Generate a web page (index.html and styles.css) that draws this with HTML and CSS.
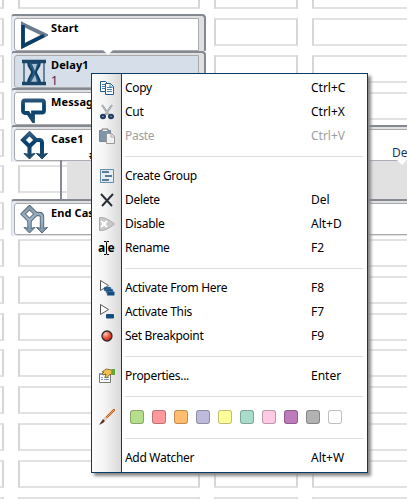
FILE: index.html
```html
<!DOCTYPE html>
<html lang="en"><head><meta charset="utf-8"><title>Workflow designer</title><link rel="stylesheet" href="styles.css"></head>
<body>
<svg class="defs" width="0" height="0">
  <defs>
    <linearGradient id="navy" gradientUnits="userSpaceOnUse" x1="0" y1="0" x2="0" y2="29"><stop offset="0" stop-color="#43647f"/><stop offset=".4" stop-color="#06406f"/><stop offset="1" stop-color="#244c6b"/></linearGradient>
    <linearGradient id="steel" gradientUnits="userSpaceOnUse" x1="0" y1="0" x2="0" y2="29"><stop offset="0" stop-color="#8292a1"/><stop offset=".5" stop-color="#9fb6c8"/><stop offset="1" stop-color="#7892a6"/></linearGradient>
    <radialGradient id="red" cx=".35" cy=".3" r=".8"><stop offset="0" stop-color="#ffc4b4"/><stop offset=".55" stop-color="#ec4c37"/><stop offset="1" stop-color="#a91e18"/></radialGradient>
    <g id="branch-lines"><path d="M9.500 2.500 16 9l-6.500 6.500L3 9Z" fill="none"/><path d="M9.500 15v10M15 9h4q3 0 3 3v13" fill="none"/></g>
    <path id="branch-heads" d="M4 22.500l5.500 5.500 5.500-5.500-5.500 1ZM16.500 22.500 22 28l5.500-5.500-5.500 1Z"/>
  </defs>
</svg>
<main class="designer">
  <div class="cells" id="cells"></div>
  <div class="flow">
    <section class="step"><div class="card"><svg class="step-icon" viewBox="0 0 28 28"><path d="M3 3.500 25 14 3 25Z" fill="#fff" stroke="#697b8c" stroke-width="4"/><path d="M24 14.500 3 25V4" fill="none" stroke="#083d69" stroke-width="3.600"/></svg><div class="name">Start</div></div></section>
    <section class="step selected"><div class="card"><svg class="step-icon" viewBox="0 0 28 28"><path d="M4 4v21M24 4v21" stroke="#64839a" stroke-width="2"/><path d="M8 4h12c0 6-4 7-4 10s4 6 4 11H8c0-5 4-8 4-11S8 10 8 4Z" fill="#285b83" stroke="#103e61" stroke-width="2"/><path d="M12 6h5l-2 7M11 24l4-7 2 7" fill="#a9c1d2"/><path d="M2 3.500h24M2 25.500h24" stroke="#194568" stroke-width="3.500"/></svg><div class="name">Delay1<span class="value">1</span></div></div></section>
    <section class="step"><div class="card"><svg class="step-icon" viewBox="0 0 28 28"><path d="M5 5.500h17q2 0 2 2v8q0 2-2 2h-9v8L8 18H5q-2 0-2-2V8q0-2.500 2-2.500Z" fill="#fff" stroke="url(#navy)" stroke-width="3.800"/></svg><div class="name">Message1</div></div></section>
    <section class="step wide"><div class="card"><svg class="step-icon" viewBox="0 0 28 29"><use href="#branch-lines" stroke="url(#navy)" stroke-width="4"/><use href="#branch-heads" fill="url(#navy)" stroke="url(#navy)"/></svg><div class="name">Case1<span class="hash">#</span></div></div></section>
    <section class="branches"><span class="rail"></span><div class="branch-area"></div><span class="default">De</span><i class="notch"></i></section>
    <section class="step wide end"><div class="card"><svg class="step-icon" viewBox="0 0 28 29"><use href="#branch-lines" stroke="#536574" stroke-width="4.400"/><use href="#branch-heads" fill="url(#steel)" stroke="#536574"/><use href="#branch-lines" stroke="url(#steel)" stroke-width="2.600"/></svg><div class="name">End Case1</div></div></section>
  </div>
  <i class="start-notch"></i>
</main>
<nav class="menu">
  <ul>
    <li><svg class="icon" viewBox="0 0 16 16"><g fill="#fff" stroke="#255c8b"><path d="M1.500 1.500h5l3 3v7h-8Z"/><path d="M6.500 3.500h5l3 3v8h-8Z"/></g><path d="M3 4.500h3M3 6.500h3M3 8.500h3M8 7.500h5M8 9.500h5M8 11.500h5M11 4v3h3" fill="none" stroke="#4d80aa"/></svg><span>Copy</span><kbd>Ctrl+C</kbd></li>
    <li><svg class="icon" viewBox="0 0 16 16"><path d="m3 1 7 10M13 1 6 11" stroke="#88909a" stroke-width="2"/><path d="m3 1 7 10M13 1 6 11" stroke="#dce0e3" stroke-width=".7"/><g fill="#7891b0" stroke="#213d65" stroke-width="2"><ellipse cx="4" cy="12.500" rx="2" ry="1.700"/><ellipse cx="12" cy="12.500" rx="2" ry="1.700"/></g></svg><span>Cut</span><kbd>Ctrl+X</kbd></li>
    <li class="off"><svg class="icon" viewBox="0 0 16 16"><path d="M.5 2.500h11v11H.5Z" fill="#8095aa" stroke="#778797"/><path d="M3 3V1h6v2" fill="#eee" stroke="#777"/><path d="M7.500 5.500h5l3 3v7h-8Z" fill="#f1f1f1" stroke="#999"/><path d="M12 6v3h3" fill="none" stroke="#aaa"/></svg><span>Paste</span><kbd>Ctrl+V</kbd></li>
    <li class="line"></li>
    <li><svg class="icon" viewBox="0 0 16 16"><path d="M1.500 1.500h13v13h-13Z" fill="#e5edf2" stroke="#648ba8"/><path d="M3 4h7M6 8h7M3 12h7" stroke="#597d98" stroke-width="2.200"/></svg><span>Create Group</span><kbd></kbd></li>
    <li><svg class="icon" viewBox="0 0 16 16"><path d="m2 2 11 12M14 2 3 14" stroke="#292e36" stroke-width="1.900"/></svg><span>Delete</span><kbd>Del</kbd></li>
    <li><svg class="icon" viewBox="0 0 16 16"><path d="M.5 1.500q6-1 15 6.500-9 7.500-15 6.500Z" fill="#c9c9c9" stroke="#aaa"/><path d="m2 5 6 6M8 5l-6 6" stroke="#fff" stroke-width="2"/></svg><span>Disable</span><kbd>Alt+D</kbd></li>
    <li><svg class="icon rename" viewBox="0 0 18 16"><text x="0" y="12">a</text><text x="9.500" y="12">e</text><path d="M6 1.500h2l.5 1 .5-1h2M8.500 2.500v11M6 14.500h2l.5-1 .5 1h2" fill="none" stroke="#000"/></svg><span>Rename</span><kbd>F2</kbd></li>
    <li class="line"></li>
    <li><svg class="icon" viewBox="0 0 16 16"><path d="m1.500.5 8 5-8 5Z" fill="#fff" stroke="#555"/><g fill="#164d7c" stroke="#6f96b1" stroke-width=".5"><rect x="5" y="7" width="7" height="4" rx="1"/><rect x="7" y="9" width="7" height="4" rx="1"/><rect x="8" y="11.500" width="7.500" height="4" rx="1"/></g></svg><span>Activate From Here</span><kbd>F8</kbd></li>
    <li><svg class="icon" viewBox="0 0 16 16"><path d="m1.500.5 8 5-8 5Z" fill="#fff" stroke="#555"/><rect x="7" y="10" width="8" height="4.500" rx="1" fill="#164d7c"/></svg><span>Activate This</span><kbd>F7</kbd></li>
    <li><svg class="icon" viewBox="0 0 16 16"><circle cx="8" cy="8" r="5" fill="url(#red)" stroke="#302b2c" stroke-width="1.300"/></svg><span>Set Breakpoint</span><kbd>F9</kbd></li>
    <li class="line"></li>
    <li><svg class="icon" viewBox="0 0 16 16"><path d="M.5 5.500h11v9H.5Z" fill="#fff" stroke="#777"/><path d="M1 6h10" stroke="#84a0ce" stroke-width="2"/><path d="M2 9.500h2m1 0h5M2 11.500h2m1 0h5" stroke="#8299bd"/><path d="m3 4 4-3 6 1v4l-3 1-2 3-2-1 1-3-3 1-1-1 2-2Z" fill="#efc14f" stroke="#765b25" stroke-width=".8"/><path d="M13 1h3v6h-3Z" fill="#65a63b"/></svg><span>Properties...</span><kbd>Enter</kbd></li>
    <li class="line"></li>
    <li class="palette"><svg class="icon" viewBox="0 0 16 16"><path d="m15 1-9 9" stroke="#c15a19" stroke-width="2.300" stroke-linecap="round"/><path d="m15 1-8 8" stroke="#ffb15f" stroke-width=".8"/><path d="m6.500 8 2 2-2 2-2-2Z" fill="#d6d6d6"/><path d="m4 10 2 2-2 2-4 2Z" fill="#5e3026"/></svg><div class="swatches"><i class="green"></i><i class="rose"></i><i class="orange"></i><i class="lilac"></i><i class="yellow"></i><i class="mint"></i><i class="pink"></i><i class="purple"></i><i class="gray"></i><i class="white"></i></div></li>
    <li class="line"></li>
    <li><b class="icon"></b><span>Add Watcher</span><kbd>Alt+W</kbd></li>
  </ul>
</nav>
<script>document.getElementById('cells').innerHTML='<i></i>'.repeat(60);</script>
</body></html>
```
FILE: styles.css
```css
* { box-sizing: border-box; }
body { margin: 0; width: 407px; height: 499px; overflow: hidden; background: #fff; color: #000; font: 12px/16px "Noto Sans", sans-serif; }
.defs { position: absolute; }
.designer { position: relative; width: 407px; height: 499px; overflow: hidden; }
.cells { display: grid; grid-template-columns: 84px 182px 84px 182px; grid-auto-rows: 28px; gap: 8.8px 14px; margin: -18.6px 0 0 -80px; width: 580px; }
.cells i { border: 2px solid #e2e2e2; border-left-color: #d6d6d6; border-right-color: #d6d6d6; }
.flow { position: absolute; left: 11px; top: 14px; width: 396px; }
.step { width: 195px; height: 37px; padding: 2px 5px 0 2px; border: solid #858991; border-width: 2px 2px 0 1px; border-left-color: #d5d8df; border-radius: 3px 4px 1px 1px; background: linear-gradient(90deg, #e7ebf6 4px, #e0e0e3 4px); }
.card { display: flex; height: 33px; padding: 2px 0 0 5px; border: 1px solid #a9aaad; border-radius: 3px 0 0 3px; background: #fff; }
.selected .card { background: #d6dfe9; }
.step.wide { width: 410px; }
.step.wide .card { height: 32px; padding-top: 1px; }
.step.end { height: 37px; }
.step-icon { width: 28px; height: 28px; flex: none; }
.wide .step-icon { height: 29px; }
.name { margin: -2px 0 0 3px; font: bold 11px/17px "Noto Sans", sans-serif; letter-spacing: .1px; white-space: nowrap; }
.wide .name { margin-top: -1px; }
.value { display: block; font: 12px/15px "Noto Sans", sans-serif; color: #40265c; }
.hash { display: block; padding-left: 38px; line-height: 15px; }
.branches { position: relative; display: flex; height: 39px; margin: -2px 0 0 49px; }
.rail { width: 2px; background: #888b92; margin-right: 5px; }
.branch-area { flex: 1; background: #e1e1e1; border-top: 1px solid #aaadb5; }
.default { position: absolute; left: 332px; top: -15px; color: #18365b; }
.notch, .start-notch { position: absolute; left: 337px; top: 0; width: 10px; height: 5px; background: #fff; clip-path: polygon(0 0, 100% 0, 50% 100%); }
.start-notch { left: 103px; top: 50px; }
.menu { position: absolute; left: 91px; top: 73px; width: 277px; height: 400px; border: 1px solid #083c67; background: linear-gradient(90deg, #fcfcfc, #f5f5f5 12px, #d9d9d9 29px, #083c67 29px, #083c67 30px, #fff 30px); box-shadow: 3px 3px 3px #888; }
.menu ul { margin: 0; padding: 2px 0 0; list-style: none; }
.menu li { display: flex; align-items: center; height: 24px; }
.menu li.line { height: 16px; margin: 0 4px 0 33px; background: linear-gradient(transparent 8px, #dedede 8px, #dedede 9px, transparent 9px); }
.icon { width: 16px; height: 16px; flex: none; margin: 0 10px 0 7px; }
.menu span { width: 186px; white-space: nowrap; letter-spacing: -.3px; }
kbd { font: inherit; }
.off { color: #9e9e9e; }
.rename { width: 18px; margin-left: 6px; margin-right: 9px; font: bold 12px "Noto Sans", sans-serif; }
.menu .palette { height: 26px; }
.swatches { display: flex; gap: 8px; margin-left: 5px; }
.swatches i { width: 14px; height: 14px; border: 1px solid rgba(0,0,0,.25); border-radius: 3px; }
.green { background: #b5df8c; }
.rose { background: #ff999b; }
.orange { background: #ffbd6d; }
.lilac { background: #bebadb; }
.yellow { background: #ffff99; }
.mint { background: #a9dccb; }
.pink { background: #ffcae3; }
.purple { background: #bd7bbb; }
.gray { background: #b2b2b2; }
.white { background: #fff; }
```
